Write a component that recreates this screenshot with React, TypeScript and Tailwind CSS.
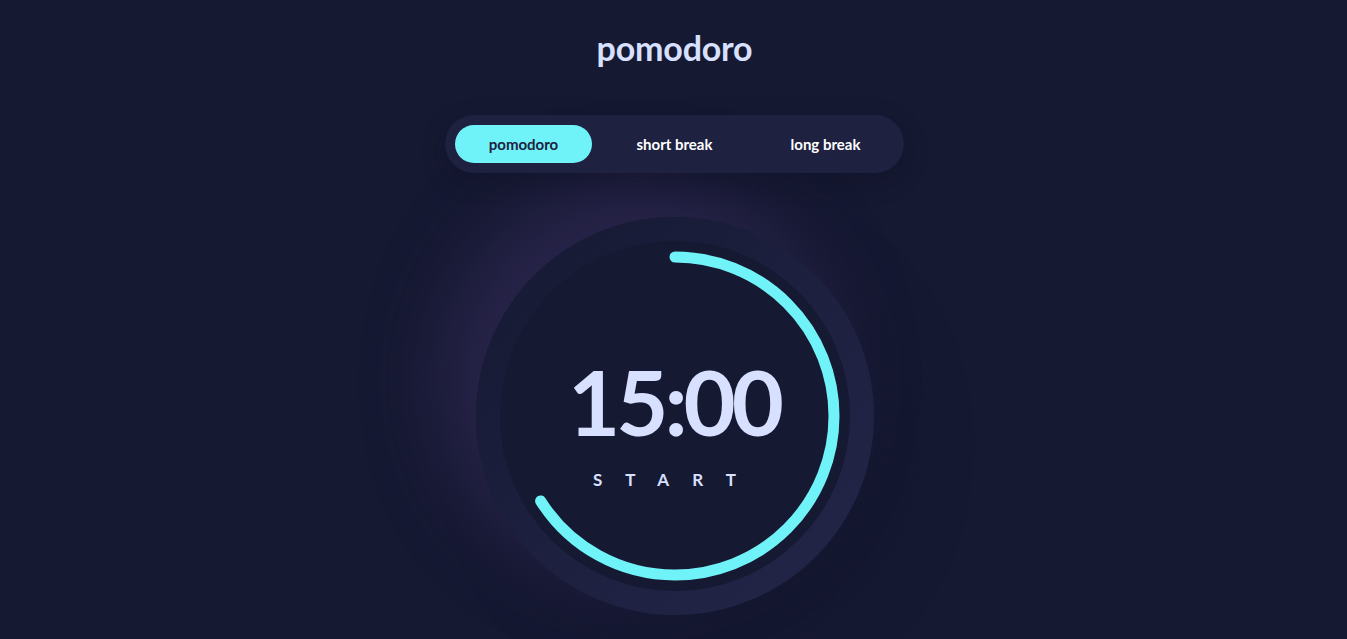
import { useState } from 'react';

const tabs = ['pomodoro', 'short break', 'long break'];

// anillo de progreso
const ProgressRing = ({ progress }: { progress: number }) => {
  const r = 159;
  const c = 2 * Math.PI * r;
  return (
    <svg width="350" height="350" viewBox="0 0 350 350" className="absolute inset-0 -rotate-90">
      <circle
        cx="175"
        cy="175"
        r={r}
        fill="none"
        stroke="#70F3F8"
        strokeWidth="11"
        strokeLinecap="round"
        strokeDasharray={`${c * progress} ${c}`}
      />
    </svg>
  );
};

export default function App() {
  const [active, setActive] = useState(0);

  return (
    <div
      className="min-h-screen bg-[#161932] flex flex-col items-center overflow-hidden"
      style={{ fontFamily: 'Lato, "Noto Sans", sans-serif' }}
    >
      <h1 className="mt-[28px] text-[34px] leading-[40px] font-bold text-[#D7E0FF] tracking-[-0.2px] ml-[2px]">
        pomodoro
      </h1>

      <div className="relative z-10 mt-[47px] ml-[2px] flex gap-[14px] p-[10px] rounded-[29px] bg-[#1E213F] shadow-[0_8px_24px_rgba(10,12,30,0.3)]">
        {tabs.map((t, i) => (
          <button
            key={t}
            onClick={() => setActive(i)}
            className={`w-[137px] h-[38px] rounded-[19px] text-[15px] font-bold ${
              active === i ? 'bg-[#70F3F8] text-[#1E213F]' : 'text-white'
            }`}
          >
            {t}
          </button>
        ))}
      </div>

      <div className="mt-[44px] ml-[3px] w-[398px] h-[398px] rounded-full flex items-center justify-center bg-[linear-gradient(315deg,#232649_0%,#1c1f3d_55%,#161932_100%)] shadow-[-35px_-35px_70px_#28244a,30px_30px_60px_#14172f]">
        <div className="relative w-[350px] h-[350px] rounded-full bg-[#161932]">
          <ProgressRing progress={0.66} />
          <div className="relative flex flex-col items-center pt-[115px]">
            <div className="text-[90px] leading-[90px] font-bold text-[#D7E0FF] tracking-[-4px] mr-[2px]">
              15:00
            </div>
            <div className="mt-[24px] ml-[2px] text-[17px] leading-[20px] font-bold text-[#D7E0FF] tracking-[23px]">
              START
            </div>
          </div>
        </div>
      </div>
    </div>
  );
}
